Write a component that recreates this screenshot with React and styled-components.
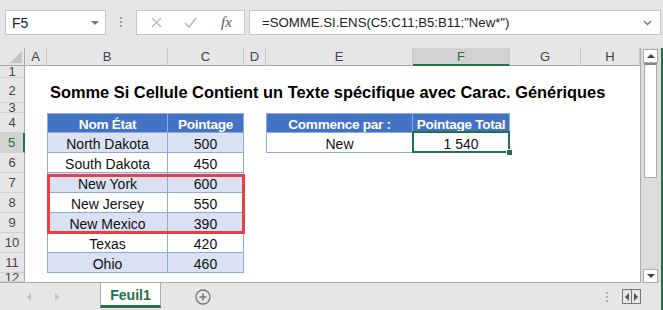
import React from "react";
import styled, { createGlobalStyle } from "styled-components";

const GREEN = "#217346";
const LINE = "#ababab";
const TBL = "#8ea9db";

const GlobalStyle = createGlobalStyle`
  html, body {
    margin: 0;
    padding: 0;
    background: #e6e6e6;
  }
  body {
    font-family: "Liberation Sans", Arial, sans-serif;
  }
`;

const Window = styled.div`
  width: 663px;
  height: 310px;
  overflow: hidden;
  background: #e6e6e6;
  display: flex;
  flex-direction: column;
`;

/* ---------- formula bar ---------- */

const FormulaBar = styled.div`
  height: 48px;
  box-sizing: border-box;
  padding: 10px 2px 0 5px;
  display: flex;
  align-items: flex-start;
`;

const Box = styled.div`
  height: 25px;
  box-sizing: border-box;
  border: 1px solid #c6c6c6;
  background: #fff;
  display: flex;
  align-items: center;
`;

const NameBox = styled(Box)`
  width: 101px;
  padding: 0 6px;
  justify-content: space-between;
  font-size: 14px;
  color: #222;
`;

const Dots = styled.div`
  margin: ${(p) => p.$margin};
  align-self: ${(p) => p.$align || "auto"};
  display: flex;
  flex-direction: column;
  gap: 2px;
  span {
    width: 2px;
    height: 2px;
    background: ${(p) => p.$color || "#a0a0a0"};
  }
`;

const FxBox = styled(Box)`
  width: 109px;
  margin-left: 14px;
  padding-left: 14px;
  gap: 22px;
`;

const FxText = styled.span`
  font-family: "Liberation Serif", "Times New Roman", serif;
  font-style: italic;
  font-size: 15px;
  color: #555;
  margin-left: 2px;
`;

const FormulaInput = styled(Box)`
  flex: 1;
  margin-left: 4px;
  padding: 0 8px 0 12px;
  justify-content: space-between;
  font-size: 13.2px;
  color: #222;
`;

/* ---------- sheet ---------- */

const Lower = styled.div`
  flex: 1;
  display: flex;
`;

const Workspace = styled.div`
  flex: 1;
  display: flex;
  flex-direction: column;
`;

const GreenEdge = styled.div`
  width: 2px;
  background: ${GREEN};
`;

const MainRow = styled.div`
  height: 235px;
  display: flex;
`;

const Sheet = styled.div`
  position: relative;
  width: 641px;
  box-sizing: border-box;
  border-right: 1px solid ${LINE};
  border-bottom: 1px solid ${LINE};
  background: #fff;
  overflow: hidden;
  display: grid;
  grid-template-columns: 25px 22px 121px 76px 22px 147px 97px 71px 59px;
  grid-template-rows: 18px 12px 25px 10px repeat(8, 20px) 9px;
`;

const Corner = styled.div`
  background: #e6e6e6;
  box-sizing: border-box;
  border-right: 1px solid ${LINE};
  border-bottom: 1px solid ${LINE};
  display: flex;
  align-items: flex-end;
  justify-content: flex-end;
  padding: 0 2px 2px 0;
`;

const ColHead = styled.div`
  background: ${(p) => (p.$active ? "#d2d2d2" : "#e6e6e6")};
  box-sizing: border-box;
  border-right: 1px solid #c8c8c8;
  border-bottom: ${(p) => (p.$active ? `2px solid ${GREEN}` : `1px solid ${LINE}`)};
  color: ${(p) => (p.$active ? GREEN : "#444")};
  font-size: 13px;
  display: flex;
  align-items: center;
  justify-content: center;
`;

const RowHead = styled.div`
  background: ${(p) => (p.$active ? "#d2d2d2" : "#e6e6e6")};
  box-sizing: border-box;
  border-bottom: 1px solid #d0d0d0;
  border-right: ${(p) => (p.$active ? `2px solid ${GREEN}` : `1px solid ${LINE}`)};
  color: ${(p) => (p.$active ? GREEN : "#444")};
  font-size: 13px;
  overflow: hidden;
  display: flex;
  align-items: center;
  justify-content: center;
  line-height: 1;
`;

const cellBg = { head: "#4472c4", band: "#d9e1f2", plain: "#fff" };

const Cell = styled.div`
  position: relative;
  box-sizing: border-box;
  padding-top: 2px;
  background: ${(p) => cellBg[p.$kind] || "#fff"};
  color: ${(p) => (p.$kind === "head" ? "#fff" : "#111")};
  font-weight: ${(p) => (p.$kind === "head" ? 700 : 400)};
  font-size: ${(p) => (p.$kind === "head" ? "13.6px" : "14px")};
  letter-spacing: ${(p) => (p.$kind === "head" ? "-0.3px" : "0")};
  white-space: nowrap;
  display: flex;
  align-items: center;
  justify-content: center;
  border-right: ${(p) => (p.$kind ? `1px solid ${TBL}` : "none")};
  border-bottom: ${(p) => (p.$kind ? `1px solid ${TBL}` : "none")};
  border-left: ${(p) => (p.$left ? `1px solid ${TBL}` : "none")};
  border-top: ${(p) => (p.$top ? `1px solid ${TBL}` : "none")};
`;

const TitleCell = styled.div`
  grid-column: span 8;
  display: flex;
  align-items: center;
  padding-left: 25px;
  padding-top: 3px;
  font-size: 16.4px;
  font-weight: 700;
  color: #000;
  white-space: nowrap;
`;

const Selection = styled.div`
  position: absolute;
  top: -2px;
  left: -1px;
  right: -1px;
  bottom: -1px;
  border: 2px solid ${GREEN};
  z-index: 2;
  &::after {
    content: "";
    position: absolute;
    right: -5px;
    bottom: -5px;
    width: 5px;
    height: 5px;
    background: ${GREEN};
    border: 1px solid #fff;
  }
`;

const Highlight = styled.div`
  position: absolute;
  left: 47px;
  top: 126px;
  width: 198px;
  height: 60px;
  box-sizing: border-box;
  border: 3px solid #e8413f;
  pointer-events: none;
  z-index: 1;
`;

/* ---------- vertical scrollbar ---------- */

const VScroll = styled.div`
  width: 20px;
  background: #dcdcdc;
  display: flex;
  flex-direction: column;
  padding-left: 2px;
  box-sizing: border-box;
`;

const ScrollBtn = styled.div`
  width: 15px;
  height: 14px;
  box-sizing: border-box;
  background: #fff;
  border: 1px solid ${LINE};
  display: flex;
  align-items: center;
  justify-content: center;
  margin-top: ${(p) => p.$mt || 0};
`;

const Thumb = styled.div`
  width: 13px;
  height: 115px;
  margin-left: 1px;
  box-sizing: border-box;
  background: #fff;
  border: 1px solid ${LINE};
  border-top: 2px solid #888;
`;

/* ---------- tab bar ---------- */

const TabBar = styled.div`
  flex: 1;
  display: flex;
  align-items: stretch;
  padding-right: 20px;
`;

const NavArrows = styled.div`
  width: 100px;
  display: flex;
  align-items: center;
  padding-left: 27px;
  box-sizing: border-box;
  gap: 24px;
`;

const Tab = styled.div`
  width: 61px;
  margin-top: -1px;
  box-sizing: border-box;
  background: #fff;
  border-left: 1px solid ${LINE};
  border-right: 1px solid ${LINE};
  border-bottom: 3px solid ${GREEN};
  margin-bottom: 2px;
  color: ${GREEN};
  font-weight: 700;
  font-size: 14px;
  display: flex;
  align-items: center;
  justify-content: center;
  padding-top: 2px;
`;

const AddSheet = styled.div`
  margin-left: 34px;
  display: flex;
  align-items: center;
`;

const Spacer = styled.div`
  flex: 1;
`;

const HArrows = styled.div`
  display: flex;
  align-self: center;
  margin-left: 14px;
  border: 1px solid #777;
  height: 15px;
  box-sizing: border-box;
  div {
    width: 8px;
    display: flex;
    align-items: center;
    justify-content: center;
  }
  div + div {
    border-left: 1px solid #777;
  }
`;

const Tri = ({ dir, color = "#444", size = 4 }) => {
  const s = size;
  const pts = {
    up: `0,${s} ${s},0 ${2 * s},${s}`,
    down: `0,0 ${2 * s},0 ${s},${s}`,
    left: `${s},0 ${s},${2 * s} 0,${s}`,
    right: `0,0 ${s},${s} 0,${2 * s}`,
  }[dir];
  const w = dir === "up" || dir === "down" ? 2 * s : s;
  const h = dir === "up" || dir === "down" ? s : 2 * s;
  return (
    <svg width={w} height={h} viewBox={`0 0 ${w} ${h}`}>
      <polygon points={pts} fill={color} />
    </svg>
  );
};

const cols = ["A", "B", "C", "D", "E", "F", "G", "H"];

const states = [
  ["North Dakota", 500],
  ["South Dakota", 450],
  ["New York", 600],
  ["New Jersey", 550],
  ["New Mexico", 390],
  ["Texas", 420],
  ["Ohio", 460],
];

function buildRow(n) {
  const cells = {};
  if (n === 4) {
    cells.B = { kind: "head", text: "Nom État", left: true, top: true };
    cells.C = { kind: "head", text: "Pointage", top: true };
    cells.E = { kind: "head", text: "Commence par :", left: true, top: true };
    cells.F = { kind: "head", text: "Pointage Total", top: true };
  }
  if (n >= 5 && n <= 11) {
    const [name, score] = states[n - 5];
    const kind = n % 2 === 1 ? "band" : "plain";
    cells.B = { kind, text: name, left: true };
    cells.C = { kind, text: score };
  }
  if (n === 5) {
    cells.E = { kind: "plain", text: "New", left: true };
    cells.F = { kind: "plain", text: "1 540", selected: true };
  }
  return cells;
}

export default function App() {
  const rowNums = [1, 2, 3, 4, 5, 6, 7, 8, 9, 10, 11, 12];

  return (
    <Window>
      <GlobalStyle />
      <FormulaBar>
        <NameBox>
          <span>F5</span>
          <Tri dir="down" color="#777" size={4} />
        </NameBox>
        <Dots $margin="7px 0 0 14px">
          <span />
          <span />
          <span />
        </Dots>
        <FxBox>
          <svg width="11" height="11" viewBox="0 0 11 11">
            <path d="M1 1 L10 10 M10 1 L1 10" stroke="#b8b8b8" strokeWidth="1.4" />
          </svg>
          <svg width="13" height="11" viewBox="0 0 13 11">
            <path d="M1 6 L5 10 L12 1" stroke="#b8b8b8" strokeWidth="1.6" fill="none" />
          </svg>
          <FxText>fx</FxText>
        </FxBox>
        <FormulaInput>
          <span>=SOMME.SI.ENS(C5:C11;B5:B11;"New*")</span>
          <svg width="9" height="6" viewBox="0 0 9 6">
            <path d="M1 1 L4.5 4.5 L8 1" stroke="#777" strokeWidth="1.4" fill="none" />
          </svg>
        </FormulaInput>
      </FormulaBar>

      <Lower>
        <Workspace>
          <MainRow>
            <Sheet>
              <Corner>
                <svg width="12" height="12" viewBox="0 0 12 12">
                  <polygon points="12,0 12,12 0,12" fill="#c4c4c4" />
                </svg>
              </Corner>
              {cols.map((c) => (
                <ColHead key={c} $active={c === "F"}>
                  {c}
                </ColHead>
              ))}
              {rowNums.map((n) => {
                const head = (
                  <RowHead key={`h${n}`} $active={n === 5}>
                    {n}
                  </RowHead>
                );
                if (n === 2) {
                  return [
                    head,
                    <TitleCell key="title">
                      Somme Si Cellule Contient un Texte spécifique avec Carac. Génériques
                    </TitleCell>,
                  ];
                }
                const cells = buildRow(n);
                return [
                  head,
                  ...cols.map((c) => {
                    const cell = cells[c];
                    if (!cell) return <Cell key={`${c}${n}`} />;
                    return (
                      <Cell
                        key={`${c}${n}`}
                        $kind={cell.kind}
                        $left={cell.left}
                        $top={cell.top}
                      >
                        {cell.text}
                        {cell.selected && <Selection />}
                      </Cell>
                    );
                  }),
                ];
              })}
              <Highlight />
            </Sheet>
            <VScroll>
              <ScrollBtn $mt="1px">
                <Tri dir="up" color="#444" size={4} />
              </ScrollBtn>
              <Thumb />
              <Spacer />
              <ScrollBtn>
                <Tri dir="down" color="#444" size={4} />
              </ScrollBtn>
            </VScroll>
          </MainRow>
          <TabBar>
            <NavArrows>
              <Tri dir="left" color="#c2c2c2" size={4} />
              <Tri dir="right" color="#c2c2c2" size={4} />
            </NavArrows>
            <Tab>Feuil1</Tab>
            <AddSheet>
              <svg width="16" height="16" viewBox="0 0 16 16">
                <circle cx="8" cy="8" r="7" stroke="#777" strokeWidth="1.3" fill="none" />
                <path d="M8 4.5 V11.5 M4.5 8 H11.5" stroke="#777" strokeWidth="1.6" />
              </svg>
            </AddSheet>
            <Spacer />
            <Dots $margin="0" $color="#b0b0b0" $align="center">
              <span />
              <span />
              <span />
            </Dots>
            <HArrows>
              <div>
                <Tri dir="left" color="#555" size={4} />
              </div>
              <div>
                <Tri dir="right" color="#555" size={4} />
              </div>
            </HArrows>
          </TabBar>
        </Workspace>
        <GreenEdge />
      </Lower>
    </Window>
  );
}
